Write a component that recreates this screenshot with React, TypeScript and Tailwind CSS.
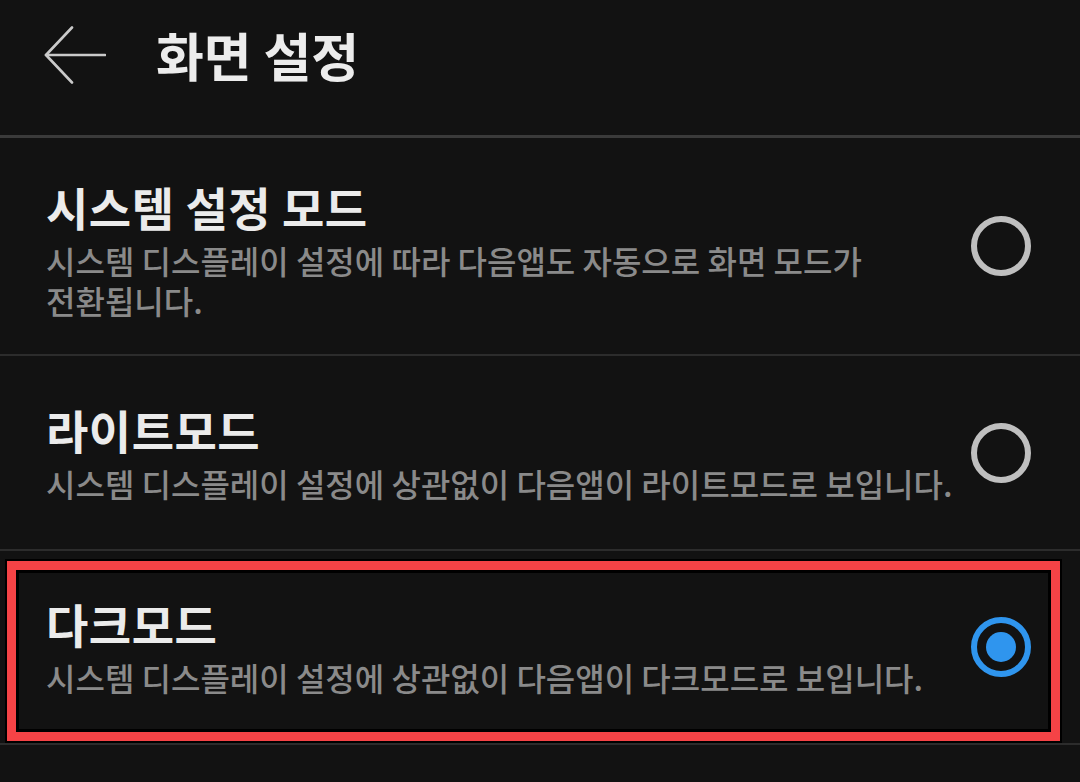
import React, { useState } from 'react';

const FONT = '"Noto Sans CJK KR", "Noto Sans", sans-serif';

const modes = [
  {
    id: 'system',
    title: '시스템 설정 모드',
    desc: ['시스템 디스플레이 설정에 따라 다음앱도 자동으로 화면 모드가', '전환됩니다.'],
    h: 'h-[216px]',
  },
  {
    id: 'light',
    title: '라이트모드',
    desc: ['시스템 디스플레이 설정에 상관없이 다음앱이 라이트모드로 보입니다.'],
    h: 'h-[193px]',
  },
  {
    id: 'dark',
    title: '다크모드',
    desc: ['시스템 디스플레이 설정에 상관없이 다음앱이 다크모드로 보입니다.'],
    h: 'h-[192px]',
  },
];

function Radio({ checked }: { checked: boolean }) {
  if (checked) {
    return (
      <div className="w-[60px] h-[60px] shrink-0 rounded-full border-[6px] border-[#2f95ee] flex items-center justify-center">
        <div className="w-[30px] h-[30px] rounded-full bg-[#2f95ee]" />
      </div>
    );
  }
  return <div className="w-[60px] h-[60px] shrink-0 rounded-full border-[6px] border-[#bfbfbf]" />;
}

export default function App() {
  const [selected, setSelected] = useState('dark');

  return (
    <div className="w-[1080px] h-[782px] bg-[#121212] overflow-hidden" style={{ fontFamily: FONT }}>
      {/* Header */}
      <div className="h-[135px] pb-[25px] flex items-center">
        <svg width="62" height="58" viewBox="0 0 62 58" className="ml-[44px]" fill="none">
          <path d="M61 29H2" stroke="#cacaca" strokeWidth="2.6" strokeLinecap="round" />
          <path d="M28 1.5L2 29L28 56.5" stroke="#cacaca" strokeWidth="2.6" strokeLinecap="round" strokeLinejoin="round" />
        </svg>
        <h1 className="ml-[50px] text-[52px] font-bold text-[#ececec] leading-none">화면 설정</h1>
      </div>
      <div className="h-[3px] bg-[#3a3a3a]" />

      {modes.map((m, i) => (
        <React.Fragment key={m.id}>
          <div
            className={`relative ${m.h} flex items-center gap-4 pl-[46px] pr-[49px] cursor-pointer`}
            onClick={() => setSelected(m.id)}
          >
            {m.id === 'dark' && (
              <div className="absolute left-[7px] top-[10px] w-[1053px] h-[180px] border-[9px] border-[#f54346] shadow-[inset_0_0_0_3px_#000,0_0_0_2px_#000] pointer-events-none" />
            )}
            <div className={`flex-1 ${i === 0 ? 'pt-[8px]' : ''}`}>
              <div className="text-[46px] font-bold text-[#ebebeb] leading-[52px] tracking-[0.5px]">{m.title}</div>
              <div className="mt-[8px] text-[32px] font-medium text-[#8a8a8a] leading-[40px] whitespace-nowrap">
                {m.desc.map((line, j) => (
                  <div key={j}>{line}</div>
                ))}
              </div>
            </div>
            <Radio checked={selected === m.id} />
          </div>
          <div className="h-[2px] bg-[#2c2c2c]" />
        </React.Fragment>
      ))}
    </div>
  );
}
